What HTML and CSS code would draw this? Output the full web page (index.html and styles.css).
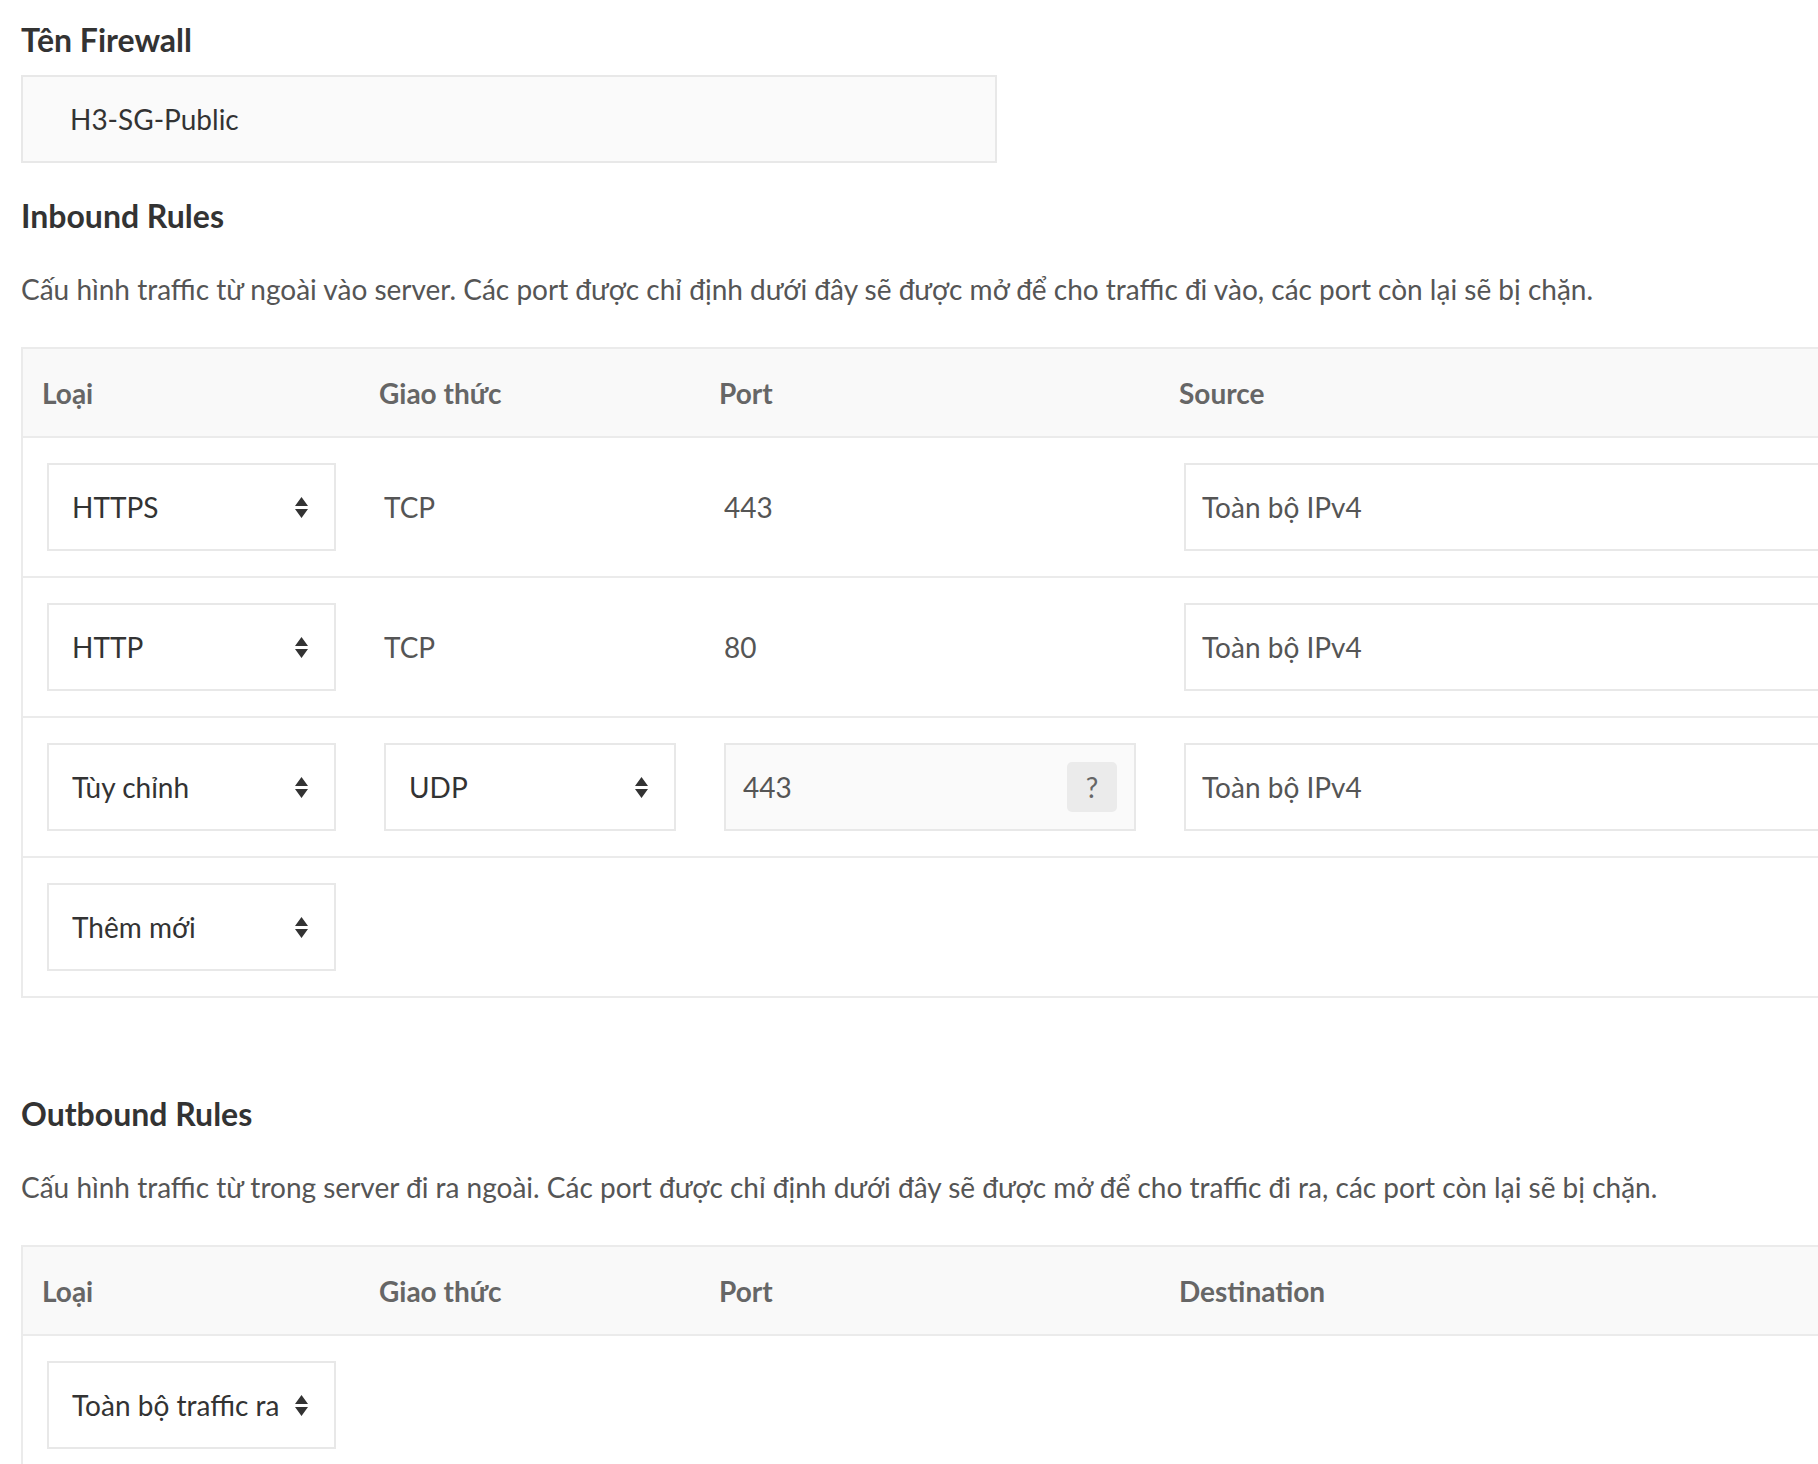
FILE: index.html
```html
<!DOCTYPE html>
<html lang="vi">
<head>
<meta charset="utf-8">
<title>Firewall</title>
<link rel="stylesheet" href="styles.css">
</head>
<body>
<main class="page">
  <h2 class="title title-first">Tên Firewall</h2>
  <div class="name-input">H3-SG-Public</div>

  <h2 class="title title-section">Inbound Rules</h2>
  <p class="desc">Cấu hình traffic từ ngoài vào server. Các port được chỉ định dưới đây sẽ được mở để cho traffic đi vào, các port còn lại sẽ bị chặn.</p>

  <div class="rules">
    <div class="th">Loại</div>
    <div class="th">Giao thức</div>
    <div class="th">Port</div>
    <div class="th">Source</div>

    <div class="td"><div class="select"><span>HTTPS</span><svg class="arrows" viewBox="0 0 13 21" width="13" height="21"><path d="M0 9 L6.5 0 L13 9 Z M0 12 L6.5 21 L13 12 Z"/></svg></div></div>
    <div class="td text">TCP</div>
    <div class="td text">443</div>
    <div class="td"><div class="field">Toàn bộ IPv4</div></div>

    <div class="td"><div class="select"><span>HTTP</span><svg class="arrows" viewBox="0 0 13 21" width="13" height="21"><path d="M0 9 L6.5 0 L13 9 Z M0 12 L6.5 21 L13 12 Z"/></svg></div></div>
    <div class="td text">TCP</div>
    <div class="td text">80</div>
    <div class="td"><div class="field">Toàn bộ IPv4</div></div>

    <div class="td"><div class="select"><span>Tùy chỉnh</span><svg class="arrows" viewBox="0 0 13 21" width="13" height="21"><path d="M0 9 L6.5 0 L13 9 Z M0 12 L6.5 21 L13 12 Z"/></svg></div></div>
    <div class="td"><div class="select"><span>UDP</span><svg class="arrows" viewBox="0 0 13 21" width="13" height="21"><path d="M0 9 L6.5 0 L13 9 Z M0 12 L6.5 21 L13 12 Z"/></svg></div></div>
    <div class="td"><div class="field field-muted"><span>443</span><span class="help">?</span></div></div>
    <div class="td"><div class="field">Toàn bộ IPv4</div></div>

    <div class="td last"><div class="select"><span>Thêm mới</span><svg class="arrows" viewBox="0 0 13 21" width="13" height="21"><path d="M0 9 L6.5 0 L13 9 Z M0 12 L6.5 21 L13 12 Z"/></svg></div></div>
    <div class="td last"></div>
    <div class="td last"></div>
    <div class="td last"></div>
  </div>

  <h2 class="title title-outbound">Outbound Rules</h2>
  <p class="desc">Cấu hình traffic từ trong server đi ra ngoài. Các port được chỉ định dưới đây sẽ được mở để cho traffic đi ra, các port còn lại sẽ bị chặn.</p>

  <div class="rules">
    <div class="th">Loại</div>
    <div class="th">Giao thức</div>
    <div class="th">Port</div>
    <div class="th">Destination</div>

    <div class="td last"><div class="select"><span>Toàn bộ traffic ra</span><svg class="arrows" viewBox="0 0 13 21" width="13" height="21"><path d="M0 9 L6.5 0 L13 9 Z M0 12 L6.5 21 L13 12 Z"/></svg></div></div>
    <div class="td last"></div>
    <div class="td last"></div>
    <div class="td last"></div>
  </div>
</main>
</body>
</html>
```

FILE: styles.css
```css
html, body {
  margin: 0;
  padding: 0;
  background: #ffffff;
  overflow: hidden;
}

body {
  font-family: Lato, "Noto Sans", "Liberation Sans", sans-serif;
  font-size: 28px;
  color: #333333;
}

.page {
  padding: 21px 0 0 21px;
  width: 2200px;
}

.title {
  margin: 0;
  font-size: 32px;
  line-height: 38px;
  font-weight: 700;
  color: #333333;
}

.title-section {
  margin-top: 34px;
}

.title-outbound {
  margin-top: 97px;
}

.name-input {
  box-sizing: border-box;
  margin-top: 16px;
  width: 976px;
  height: 88px;
  border: 2px solid #e8e8e8;
  background: #fafafa;
  padding-left: 47px;
  display: flex;
  align-items: center;
  color: #333333;
}

.desc {
  margin: 33px 0 0 0;
  line-height: 42px;
  color: #555555;
}

.rules {
  margin-top: 37px;
  display: grid;
  grid-template-columns: 337px 340px 460px 900px;
  border: 2px solid #ebebeb;
  width: max-content;
}

.th {
  box-sizing: border-box;
  height: 89px;
  padding: 0 19px;
  background: #f9f9f9;
  border-bottom: 2px solid #ebebeb;
  display: flex;
  align-items: center;
  font-weight: 700;
  color: #666666;
}

.td {
  box-sizing: border-box;
  padding: 25px 24px;
  border-bottom: 2px solid #ebebeb;
  display: flex;
  align-items: center;
  min-height: 140px;
}

.td.last {
  border-bottom: none;
  min-height: 138px;
}

.td.text {
  color: #555555;
}

.select {
  box-sizing: border-box;
  width: 100%;
  height: 88px;
  border: 2px solid #e8e8e8;
  background: #ffffff;
  padding: 0 26px 0 23px;
  display: flex;
  align-items: center;
  justify-content: space-between;
  color: #333333;
}

.arrows {
  flex: none;
  fill: #333333;
}

.field {
  box-sizing: border-box;
  width: 100%;
  height: 88px;
  border: 2px solid #e8e8e8;
  background: #ffffff;
  padding: 0 17px 0 16px;
  display: flex;
  align-items: center;
  justify-content: space-between;
  color: #555555;
}

.field-muted {
  background: #fafafa;
  padding-left: 17px;
}

.help {
  width: 50px;
  height: 50px;
  border-radius: 5px;
  background: #ebebeb;
  color: #666666;
  display: flex;
  align-items: center;
  justify-content: center;
  font-size: 28px;
}
```
